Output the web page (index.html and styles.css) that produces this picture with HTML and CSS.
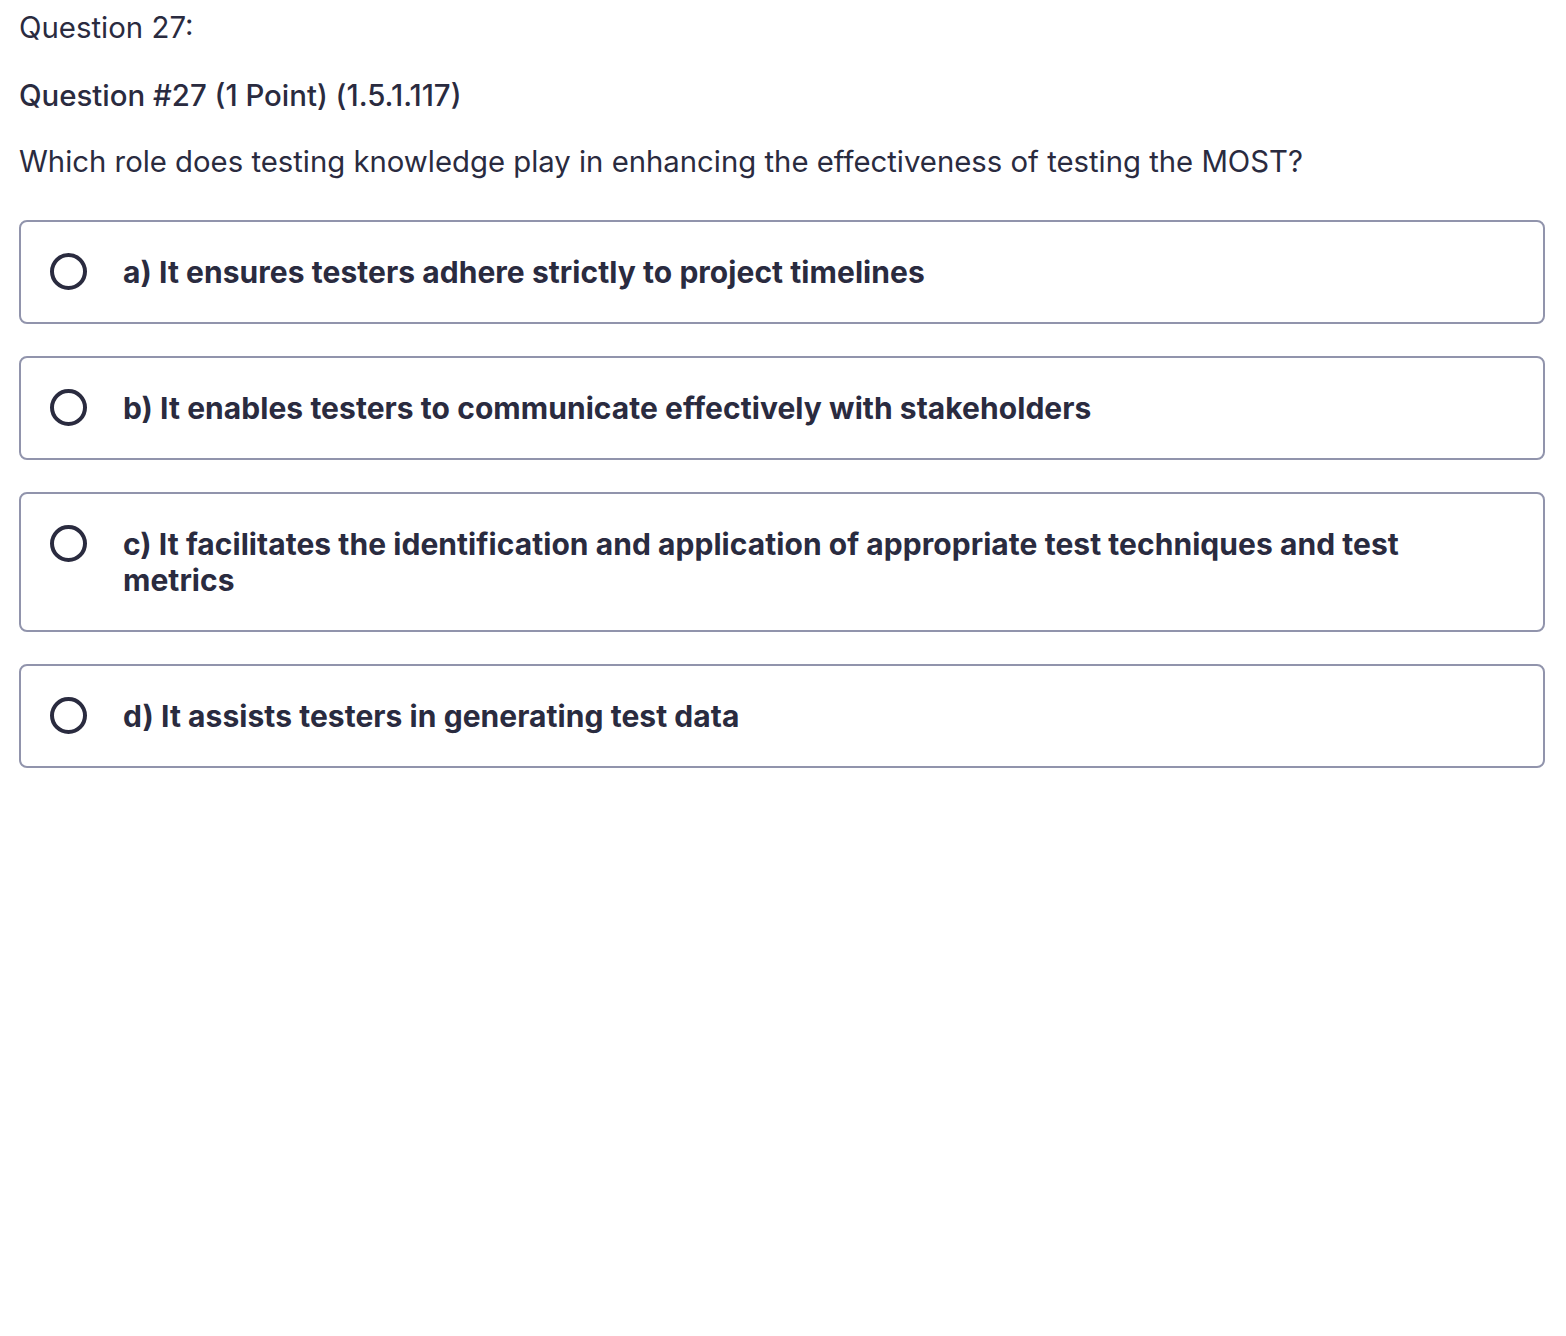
FILE: index.html
```html
<!DOCTYPE html>
<html>
<head>
<meta charset="utf-8">
<link rel="stylesheet" href="styles.css">
</head>
<body>
<div class="page">
  <div class="q-title">Question 27:</div>
  <div class="q-meta">Question #27 (1 Point) (1.5.1.117)</div>
  <div class="q-text">Which role does testing knowledge play in enhancing the effectiveness of testing the MOST?</div>
  <ul class="options">
    <li class="option"><span class="radio"></span><span class="label">a) It ensures testers adhere strictly to project timelines</span></li>
    <li class="option"><span class="radio"></span><span class="label">b) It enables testers to communicate effectively with stakeholders</span></li>
    <li class="option"><span class="radio"></span><span class="label">c) It facilitates the identification and application of appropriate test techniques and test metrics</span></li>
    <li class="option"><span class="radio"></span><span class="label">d) It assists testers in generating test data</span></li>
  </ul>
</div>
</body>
</html>
```
FILE: styles.css
```css
html, body {
  margin: 0;
  padding: 0;
  background: #ffffff;
}
body {
  font-family: Inter, "Liberation Sans", sans-serif;
  color: #2a2b3f;
}
.page {
  padding: 8px 21px 0 19px;
}
.q-title {
  font-size: 29.4px;
  line-height: 40px;
  font-weight: 400;
}
.q-meta {
  margin-top: 28px;
  font-size: 29.4px;
  line-height: 40px;
  font-weight: 500;
}
.q-text {
  margin-top: 26px;
  font-size: 29.3px;
  line-height: 40px;
  font-weight: 400;
}
.options {
  list-style: none;
  margin: 38px 0 0 0;
  padding: 0;
  display: flex;
  flex-direction: column;
  gap: 32px;
}
.option {
  display: flex;
  align-items: flex-start;
  border: 2px solid #9194ac;
  border-radius: 8px;
  padding: 32px 64px 32px 29px;
}
.radio {
  flex: none;
  width: 29px;
  height: 29px;
  border: 4.5px solid #2a2b3f;
  border-radius: 50%;
  margin-top: -1px;
  margin-right: 36px;
}
.label {
  font-size: 30px;
  line-height: 36px;
  font-weight: 700;
  letter-spacing: 0.05px;
}
```
